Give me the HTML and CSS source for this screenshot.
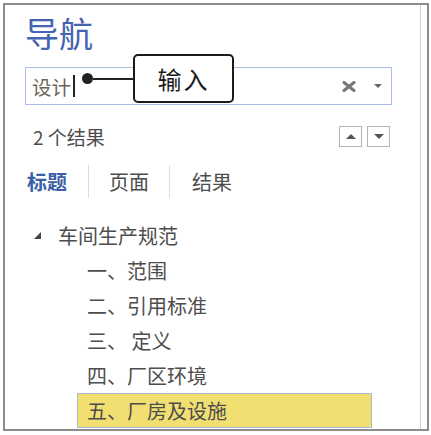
FILE: index.html
```html
<!DOCTYPE html>
<html lang="zh-CN">
<head>
    <meta charset="UTF-8">
    <title>导航</title>
    <link rel="stylesheet" href="styles.css">
</head>
<body>
    <div class="pane">
        <div class="content">
            <h1 class="title">导航</h1>

            <!-- 搜索框 -->
            <div class="search">
                <span class="search-text">设计</span><span class="caret"></span>
                <svg class="search-clear" width="14" height="11" viewBox="0 0 14 11">
                    <path d="M2 1.5 L12 9.5 M12 1.5 L2 9.5" stroke="#777" stroke-width="3" stroke-linecap="round"/>
                </svg>
                <span class="search-drop"></span>

                <!-- 标注 -->
                <div class="callout">
                    <span class="callout-dot"></span>
                    <span class="callout-line"></span>
                    <span class="callout-box">输入</span>
                </div>
            </div>

            <div class="results">
                <span>2 个结果</span>
                <div class="nav-btns">
                    <span class="nav-btn"><i class="tri-up"></i></span>
                    <span class="nav-btn"><i class="tri-down"></i></span>
                </div>
            </div>

            <div class="tabs">
                <span class="tab active">标题</span>
                <span class="tab">页面</span>
                <span class="tab">结果</span>
            </div>

            <ul class="tree">
                <li class="tree-head"><i class="expander"></i>车间生产规范</li>
                <li class="tree-item">一、范围</li>
                <li class="tree-item">二、引用标准</li>
                <li class="tree-item">三、&nbsp;定义</li>
                <li class="tree-item">四、厂区环境</li>
                <li class="tree-item selected">五、厂房及设施</li>
            </ul>
        </div>
    </div>
</body>
</html>
```

FILE: styles.css
```css
body {
    margin: 0;
    background: #ffffff;
    font-family: "Noto Sans CJK SC", "Noto Sans", sans-serif;
    color: #4d4d4d;
}

.pane {
    margin: 3px;
    width: 426px;
    height: 428px;
    box-sizing: border-box;
    border: 2px solid #8c8c8c;
    padding-right: 6px;
    overflow: hidden;
}

.content {
    height: 100%;
    border-right: 1px solid #d0d0d0;
    padding: 9px 0 0 20px;
    box-sizing: border-box;
}

.title {
    margin: 0;
    font-size: 34px;
    line-height: 38px;
    font-weight: normal;
    color: #4563b0;
}

.search {
    position: relative;
    margin-top: 15px;
    width: 367px;
    height: 38px;
    box-sizing: border-box;
    border: 1px solid #a9bfe3;
    display: flex;
    align-items: center;
    padding-left: 6px;
}

.search-text {
    font-size: 19.5px;
    color: #6e6458;
}

.caret {
    display: inline-block;
    width: 1.5px;
    height: 22px;
    background: #222;
    margin-left: 2px;
}

.search-clear {
    margin-left: auto;
}

.search-drop {
    margin: 0 9px 0 18px;
    border-left: 4px solid transparent;
    border-right: 4px solid transparent;
    border-top: 4px solid #666;
}

.callout {
    position: absolute;
    left: 56px;
    top: -14px;
    display: flex;
    align-items: center;
}

.callout-dot {
    width: 11px;
    height: 11px;
    border-radius: 50%;
    background: #222;
}

.callout-line {
    width: 40px;
    height: 2px;
    background: #222;
}

.callout-box {
    width: 101px;
    height: 49px;
    box-sizing: border-box;
    border: 2px solid #1a1a1a;
    border-radius: 5px;
    background: #fff;
    display: flex;
    align-items: center;
    justify-content: center;
    letter-spacing: 2px;
    font-size: 24px;
    color: #1a1a1a;
}

.results {
    display: flex;
    align-items: center;
    justify-content: space-between;
    width: 365px;
    margin-top: 20px;
    padding-left: 8px;
    box-sizing: border-box;
    font-size: 19px;
    height: 22px;
}

.nav-btns {
    display: flex;
    gap: 5px;
}

.nav-btn {
    width: 23px;
    height: 21px;
    box-sizing: border-box;
    border: 1px solid #b5b5b5;
    display: flex;
    align-items: center;
    justify-content: center;
}

.tri-up {
    border-left: 5px solid transparent;
    border-right: 5px solid transparent;
    border-bottom: 5px solid #555;
}

.tri-down {
    border-left: 5px solid transparent;
    border-right: 5px solid transparent;
    border-top: 5px solid #555;
}

.tabs {
    display: flex;
    margin-top: 18px;
    height: 33px;
    align-items: center;
}

.tab {
    font-size: 20px;
    padding: 0 20px;
    border-left: 1px solid #dcdcdc;
    line-height: 33px;
}

.tab:first-child {
    padding-left: 2px;
    padding-right: 21px;
    border-left: none;
}

.tab:last-child {
    padding-left: 22px;
}

.tab.active {
    color: #3a5ea8;
    font-weight: bold;
}

.tree {
    list-style: none;
    margin: 20px 0 0;
    padding: 0;
}

.tree li {
    font-size: 20px;
    line-height: 35px;
    height: 35px;
}

.tree-head {
    padding-left: 9px;
    display: flex;
    align-items: center;
}

.expander {
    width: 0;
    height: 0;
    border-left: 7px solid transparent;
    border-bottom: 7px solid #444;
    margin-right: 17px;
}

.tree-item {
    padding-left: 62px;
}

.tree-item.selected {
    margin-left: 52px;
    padding-left: 9px;
    width: 295px;
    box-sizing: border-box;
    background: #f2df72;
    border: 1px solid #a9bccf;
    line-height: 33px;
}
```
